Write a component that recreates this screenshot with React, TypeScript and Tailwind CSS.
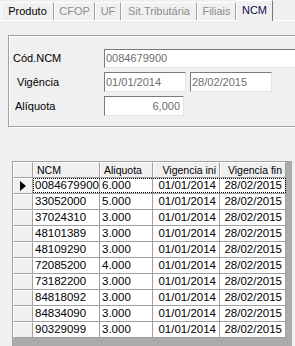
import React from "react";

const tabs = [
  { label: "Produto", w: "w-[53px]", enabled: true },
  { label: "CFOP", w: "w-[41px]", enabled: false },
  { label: "UF", w: "w-[26px]", enabled: false },
  { label: "Sit.Tributária", w: "w-[76px]", enabled: false },
  { label: "Filiais", w: "w-[39px]", enabled: false },
];

const rows = [
  ["0084679900", "6.000"],
  ["33052000", "5.000"],
  ["37024310", "3.000"],
  ["48101389", "3.000"],
  ["48109290", "3.000"],
  ["72085200", "4.000"],
  ["73182200", "3.000"],
  ["84818092", "3.000"],
  ["84834090", "3.000"],
  ["90329099", "3.000"],
];

const sunken =
  "bg-white border border-t-[#7a7a7a] border-l-[#7a7a7a] border-b-[#e3e3e3] border-r-[#e3e3e3] text-[#6d6d6d] text-[11px] leading-[17px] px-[1px] whitespace-nowrap";

const raised =
  "bg-[#f0f0f0] border-t border-l border-t-white border-l-white border-r border-b border-r-[#a0a0a0] border-b-[#a0a0a0]";

export default function App() {
  return (
    <div className="w-[295px] h-[346px] overflow-hidden bg-[#f0f0f0] flex flex-col font-['Liberation_Sans',Arial,sans-serif] text-black">
      {/* Tab strip */}
      <div className="h-[21px] shrink-0 flex items-end pl-[1px] border-b border-white">
        {tabs.map((t) => (
          <div
            key={t.label}
            className={`${t.w} h-[18px] border-l border-t border-l-white border-t-white border-r border-r-[#a0a0a0] text-[11px] leading-[17px] text-center whitespace-nowrap ${
              t.enabled ? "text-black" : "text-[#8d8d8d]"
            }`}
          >
            {t.label}
          </div>
        ))}
        <div className="w-[37px] h-[21px] -mb-px bg-[#f0f0f0] border-l border-t border-l-white border-t-white border-r border-r-[#7a7a7a] text-[11px] leading-[19px] text-center text-[#10104a]">
          NCM
        </div>
      </div>

      {/* Group box */}
      <div className="mt-[14px] ml-[8px] w-[300px] h-[92px] shrink-0 border border-t-[#a0a0a0] border-l-[#a0a0a0] border-b-[#a0a0a0] border-r-[#a0a0a0] shadow-[inset_1px_1px_0_#ffffff,1px_1px_0_#ffffff] pt-[13px] text-[11px]">
        <div className="flex items-center h-[19px]">
          <span className="w-[95px] pl-[4px]">Cód.NCM</span>
          <div className={`${sunken} w-[200px] h-[19px]`}>0084679900</div>
        </div>
        <div className="flex items-center h-[20px] mt-[4px]">
          <span className="w-[95px] pl-[8px]">Vigência</span>
          <div className={`${sunken} w-[82px] h-[20px] leading-[18px]`}>01/01/2014</div>
          <div className={`${sunken} w-[82px] h-[20px] leading-[18px] ml-[4px]`}>28/02/2015</div>
        </div>
        <div className="flex items-center h-[20px] mt-[4px]">
          <span className="w-[95px] pl-[6px]">Alíquota</span>
          <div className={`${sunken} w-[80px] h-[20px] leading-[18px] text-right pr-[3px]`}>6,000</div>
        </div>
      </div>

      {/* Data grid */}
      <div className="mt-[34px] ml-[12px] w-[280px] flex-1 bg-[#ababab] border-t border-l border-t-[#a0a0a0] border-l-[#a0a0a0]">
        <div className="grid grid-cols-[20px_67px_53px_67px_66px] text-[11.5px] leading-[15px]">
          <div className={`${raised} h-[16px]`} />
          <div className={`${raised} h-[16px] pl-[3px] text-[10.5px]`}>NCM</div>
          <div className={`${raised} h-[16px] pl-[3px] text-[10.5px]`}>Aliquota</div>
          <div className={`${raised} h-[16px] pr-[3px] text-right text-[10.5px]`}>Vigencia ini</div>
          <div className={`${raised} h-[16px] pr-[3px] text-right text-[10.5px]`}>Vigencia fin</div>
        </div>
        {rows.map(([ncm, aliq], i) => (
          <div
            key={ncm}
            className="relative grid grid-cols-[20px_67px_53px_67px_66px] text-[11.5px] leading-[15px]"
          >
            <div className={`${raised} h-[16px] flex items-center pl-[6px]`}>
              {i === 0 && (
                <svg width="6" height="10" viewBox="0 0 6 10">
                  <path d="M0 0 L6 5 L0 10 Z" fill="#000" />
                </svg>
              )}
            </div>
            <div className="h-[16px] bg-white border-r border-b border-[#a0a0a0] pl-[2px]">{ncm}</div>
            <div className="h-[16px] bg-white border-r border-b border-[#a0a0a0] pl-[2px]">{aliq}</div>
            <div className="h-[16px] bg-white border-r border-b border-[#a0a0a0] pr-[3px] text-right">01/01/2014</div>
            <div className="h-[16px] bg-white border-r border-b border-[#a0a0a0] pr-[3px] text-right">28/02/2015</div>
            {i === 0 && (
              <div className="absolute left-[20px] top-0 w-[253px] h-[15px] border border-dotted border-black pointer-events-none" />
            )}
          </div>
        ))}
      </div>
    </div>
  );
}
